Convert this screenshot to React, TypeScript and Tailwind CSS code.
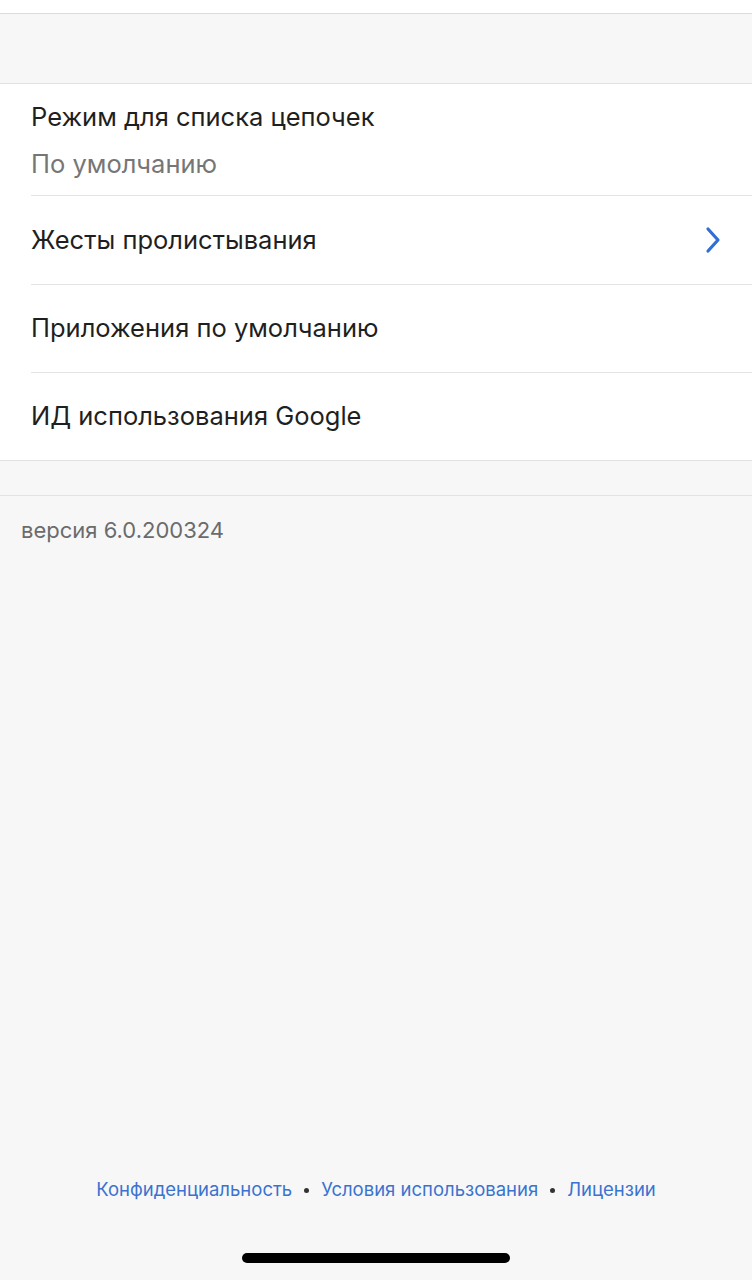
import React from "react";

function Chevron() {
  return (
    <svg width="18" height="28" viewBox="0 0 18 28" fill="none">
      <path d="M4 3 L14 14 L4 25" stroke="#2f6fd6" strokeWidth="3.2" strokeLinecap="round" strokeLinejoin="round" />
    </svg>
  );
}

export default function App() {
  const font = { fontFamily: "Inter, 'Noto Sans', sans-serif" };
  return (
    <div className="w-[752px] h-[1280px] bg-[#f7f7f8] flex flex-col overflow-hidden" style={font}>
      <div className="h-[14px] bg-white border-b border-[#dcdcdc] shrink-0" />
      <div className="h-[70px] shrink-0 border-b border-[#e3e3e3]" />
      <div className="bg-white shrink-0 border-b border-[#e3e3e3]">
        <div className="h-[112px] pl-[31px] flex flex-col">
          <div className="border-b border-[#e3e3e3] h-full flex flex-col pt-[18px]">
            <div className="text-[25.5px] leading-[30px] text-[#1f1f1f]">Режим для списка цепочек</div>
            <div className="text-[25.5px] leading-[30px] text-[#767676] mt-[17px]">По умолчанию</div>
          </div>
        </div>
        <div className="h-[89px] pl-[31px]">
          <div className="border-b border-[#e3e3e3] h-full flex items-center justify-between pr-[30px]">
            <span className="text-[25.5px] text-[#1f1f1f]">Жесты пролистывания</span>
            <Chevron />
          </div>
        </div>
        <div className="h-[88px] pl-[31px]">
          <div className="border-b border-[#e3e3e3] h-full flex items-center">
            <span className="text-[25.5px] text-[#1f1f1f]">Приложения по умолчанию</span>
          </div>
        </div>
        <div className="h-[87px] pl-[31px] flex items-center">
          <span className="text-[25.5px] text-[#1f1f1f]">ИД использования Google</span>
        </div>
      </div>
      <div className="h-[35px] shrink-0 border-b border-[#e3e3e3]" />
      <div className="pl-[21px] pt-[19px] text-[22px] leading-[30px] text-[#6b6b6b]">версия 6.0.200324</div>
      <div className="flex-1" />
      <div className="flex items-center justify-center gap-[12px] text-[18.5px] text-[#3a73cf] pb-[49px]">
        <span>Конфиденциальность</span>
        <span className="w-[5px] h-[5px] rounded-full bg-[#333]" />
        <span>Условия использования</span>
        <span className="w-[5px] h-[5px] rounded-full bg-[#333]" />
        <span>Лицензии</span>
      </div>
      <div className="flex justify-center pb-[17px]">
        <div className="w-[268px] h-[10px] rounded-full bg-black" />
      </div>
    </div>
  );
}
